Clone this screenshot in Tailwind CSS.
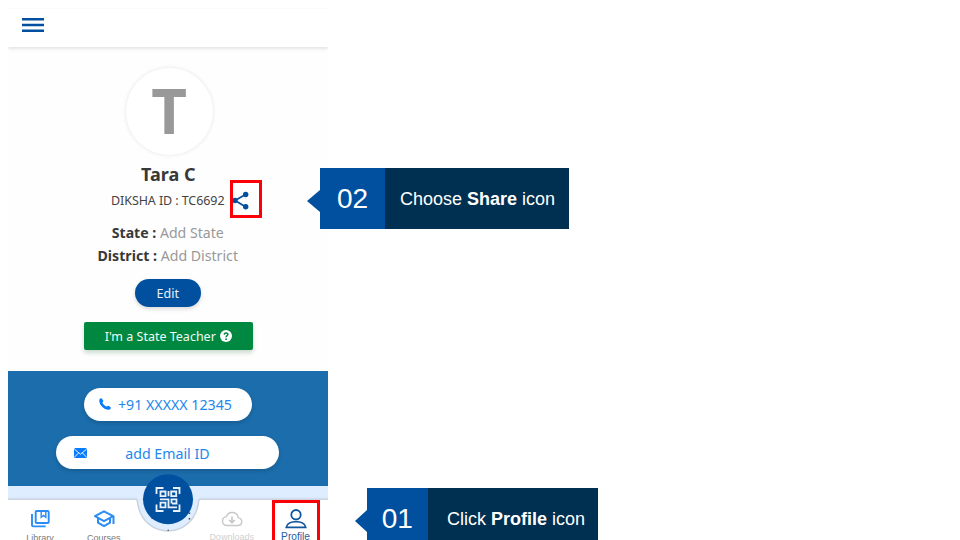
<!DOCTYPE html>
<html lang="en">
<head>
<meta charset="utf-8">
<title>Profile</title>
<script src="https://cdn.jsdelivr.net/npm/@tailwindcss/browser@4"></script>
</head>
<body class="relative h-[540px] w-[960px] overflow-hidden bg-white font-['Noto_Sans',sans-serif]">
<main class="ml-2 mt-2 flex h-[532px] w-[319.5px] flex-col overflow-hidden bg-[#fefefe]">
  <header class="flex h-[39px] shrink-0 items-center border-t border-[#fafafa] bg-white pl-[14px] pb-[6px] shadow-[0_2px_3px_rgba(0,0,0,0.1)]">
    <svg class="h-4 w-[22px]" viewBox="0 0 22 16" fill="#00509f"><path d="M0 1h22v2.5H0zM0 6.8h22v2.5H0zM0 12.6h22v2.5H0z"/></svg>
  </header>
  <section class="flex h-[324px] shrink-0 flex-col items-center pt-[21px]">
    <div class="ml-[3px] flex h-[87px] w-[87px] shrink-0 items-center justify-center rounded-full bg-white text-[62px] font-bold leading-none text-[#999] shadow-[0_0_4px_rgba(0,0,0,0.1)]"><span class="pb-[3px]">T</span></div>
    <h1 class="ml-[1px] mt-[7px] h-6 text-[18px] font-bold leading-6 text-[#383838]">Tara C</h1>
    <p class="mt-[4.5px] h-5 whitespace-nowrap text-[12.5px] leading-5 tracking-[-0.08px] text-[#444]">DIKSHA ID : TC6692</p>
    <p class="mt-[10px] h-[23px] whitespace-nowrap text-[14.1px] leading-[23px] text-[#999]"><b class="text-[#383838]">State :</b> Add State</p>
    <p class="h-[23px] whitespace-nowrap text-[14.15px] leading-[23px] text-[#999]"><b class="text-[#383838]">District :</b> Add District</p>
    <button class="mt-[12px] h-[28px] w-[66px] shrink-0 rounded-full bg-[#00509f] pt-[3px] text-[12.5px] text-[#e8f0f8] shadow-[0_2px_4px_rgba(0,0,0,0.15)]">Edit</button>
    <button class="ml-[1px] mt-[15px] flex h-[28px] w-[169px] shrink-0 items-center justify-center gap-[4px] rounded-[2px] bg-[#008840] text-[12.5px] text-[#f0faf4] shadow-[0_3px_4px_rgba(0,80,30,0.2)]">
      <span class="pt-[3px]">I'm a State Teacher</span>
      <svg class="h-3 w-3" viewBox="0 0 12 12"><circle cx="6" cy="6" r="6" fill="#fff"/><path d="M4.2 4.6C4.3 2.4 8 2.4 7.9 4.5 7.8 5.7 6.1 5.7 6.1 7.2" fill="none" stroke="#008840" stroke-width="1.5"/><circle cx="6.1" cy="9.2" r=".9" fill="#008840"/></svg>
    </button>
  </section>
  <section class="flex h-[114.5px] shrink-0 flex-col items-center bg-[#1b6dac] pt-[16.5px] text-[14.2px] text-[#2487ed]">
    <div class="flex h-[33px] w-[168.5px] shrink-0 items-center rounded-full bg-white pl-[15.5px] shadow-[0_2px_4px_rgba(0,0,0,0.16)]">
      <svg class="h-[12px] w-[12px] shrink-0" viewBox="0 0 12 12" fill="#087bff"><path d="M.5 1.2C1.2.3 2-.1 2.7.4L4.3 2.7C4.6 3.4 3.5 4 3.4 4.4 3.9 6 6 8.1 7.6 8.6 8 8.5 8.6 7.4 9.3 7.7L11.6 9.3C12 10 11.7 11 10.8 11.5 5.8 13-1 6.2.5 1.2Z"/></svg>
      <span class="ml-[7px] whitespace-nowrap pt-[2px]">+91 XXXXX 12345</span>
    </div>
    <div class="mt-[15.5px] flex h-[33px] w-[223px] shrink-0 items-center rounded-full bg-white pl-[17.5px] shadow-[0_2px_4px_rgba(0,0,0,0.16)]">
      <svg class="h-[10px] w-[13px] shrink-0" viewBox="0 0 13 10"><rect width="13" height="10" rx="1.5" fill="#087bff"/><path d="M.5 1.2 6.5 6.2 12.5 1.2M.6 9 4.5 5M12.4 9 8.5 5" fill="none" stroke="#fff" stroke-width=".9"/></svg>
      <span class="ml-[38.5px] whitespace-nowrap pt-[2px]">add Email ID</span>
    </div>
  </section>
  <div class="h-[13px] shrink-0 bg-[#deedff]"></div>
  <nav class="grid h-[60px] shrink-0 grid-cols-5 border-t border-[#ccd3dc] bg-white pt-[9px] text-center font-['Liberation_Sans',Arial,sans-serif] text-[9px] text-[#777] shadow-[0_-1px_2px_rgba(0,0,0,0.08)]">
    <a class="flex flex-col items-center">
      <svg class="h-[20px] w-[20px]" viewBox="0 0 20 20" fill="none" stroke="#2b8cf5" stroke-width="1.9"><rect x="5.7" y="2" width="13" height="12" rx="1"/><path d="M2 5v11.2q0 1.2 1.2 1.2h12.5"/><path d="M11.2 2v6.2l2.3-1.8 2.3 1.8V2" stroke-width="1.4"/></svg>
      <span class="mt-[4px] leading-[10px]">Library</span>
    </a>
    <a class="flex flex-col items-center">
      <svg class="h-[20px] w-[22px]" viewBox="0 0 22 20" fill="none" stroke="#2b8cf5" stroke-width="2" stroke-linejoin="round"><path d="M2 7.2 11 2.3l9.2 4.9-9.2 5z"/><path d="M5 9.2v4.5l6 3.5 6-3.5V9.2M20.5 7v8"/></svg>
      <span class="mt-[4px] leading-[10px]">Courses</span>
    </a>
    <span></span>
    <a class="flex flex-col items-center text-[#d0d0d0]">
      <svg class="h-[20px] w-[22px]" viewBox="0 0 22 20" fill="none" stroke="#c8c8c8" stroke-width="1.4"><path d="M5.8 16.5h10.9c5.4-.2 5.2-6.9.6-7.6C16.5 2.1 7.2 1.8 5.4 7.6.1 8.6.2 16 5.8 16.5Z"/><path d="M11 7.6v5.8M8.2 11 11 13.8 13.8 11" stroke-width="1.7"/></svg>
      <span class="mt-[3px] leading-[10px]">Downloads</span>
    </a>
    <a class="flex flex-col items-center text-[10.2px] text-[#1c5c9f]">
      <svg class="h-[20px] w-[22px]" viewBox="0 0 22 20" fill="none" stroke="#12569e" stroke-width="1.8"><circle cx="11" cy="5.7" r="4.7"/><path d="M1.3 18.3c1-7.5 18.4-7.5 19.4 0z"/></svg>
      <span class="mt-[3px] leading-[10px]">Profile</span>
    </a>
  </nav>
</main>

<!-- Scan button docked in the tab bar -->
<svg class="absolute left-[134px] top-[465px] h-[75px] w-[68px]" viewBox="0 0 68 75">
  <path d="M1.8 34.5C4 34.5 3.2 37 4 40 10.5 74.5 57.5 74.5 64 40 64.8 37 64 34.5 66.2 34.5" fill="#deedff" stroke="#ccd3dc" stroke-width="1.5"/>
  <path d="M3 29h62v5.5H3z" fill="#deedff"/>
  <path d="M17.5 54h2v-2h-2zM54.7 49h1.5v-1.5h-1.5zM54.7 54.5h1.5v-1.5h-1.5zM33.5 65.7h1.5v-1h-1.5z" fill="#444"/>
  <circle cx="34" cy="34.2" r="25" fill="#00509f"/>
  <g fill="none" stroke="#e9f2fc" stroke-width="1.8">
    <path d="M22.5 29v-6h7M39 23h6.5v6M22.5 39.5v6.500h7M39 46h6.500v-6.500"/>
    <path d="M26.500 26.500h5v4.700h-5zM37.200 26.500h5v4.700h-5zM26.500 37.700h5v4.700h-5zM34.500 26v5.200M26 34.300h8.500v8H43M38 38.500h4.500v-4.200H37.500v4.200"/>
  </g>
</svg>

<!-- Share icon and highlight frames -->
<svg class="absolute left-[232px] top-[191px] h-[19px] w-[18px]" viewBox="0 0 18 19"><path d="M13.500 3.500 3 9.500l10.500 6.200" fill="none" stroke="#00509f" stroke-width="1.700"/><g fill="#00509f"><circle cx="13.700" cy="3.500" r="2.700"/><circle cx="3" cy="9.500" r="2.700"/><circle cx="13.700" cy="15.700" r="2.700"/></g></svg>
<div class="absolute left-[230px] top-[180px] h-[38px] w-[32px] border-3 border-[#fb0007]"></div>
<div class="absolute left-[272px] top-[500px] h-[60px] w-[48px] border-3 border-[#fb0007]"></div>

<!-- Callouts -->
<div class="absolute left-[307px] top-[168px] flex h-[61px] items-center font-['Liberation_Sans',Arial,sans-serif] text-white">
  <svg class="mt-[4px] h-[22px] w-[13px]" viewBox="0 0 13 22"><path d="M13 0v22L0 11z" fill="#00509f"/></svg>
  <div class="flex h-full w-[65px] items-center justify-center bg-[#00509f] text-[28px]">02</div>
  <div class="flex h-full w-[184px] items-center justify-center bg-[#003051] pl-[1px] pt-[2px] text-[18px]"><p class="whitespace-nowrap">Choose <b>Share</b> icon</p></div>
</div>
<div class="absolute left-[355px] top-[488px] flex h-[61px] items-center font-['Liberation_Sans',Arial,sans-serif] text-white">
  <svg class="mt-[4px] h-[22px] w-[12px]" viewBox="0 0 12 22"><path d="M12 0v22L0 11z" fill="#00509f"/></svg>
  <div class="flex h-full w-[60.500px] items-center justify-center bg-[#00509f] text-[28px]">01</div>
  <div class="flex h-full w-[170px] items-center justify-center bg-[#003051] pl-[7px] pt-[2px] text-[18px]"><p class="whitespace-nowrap">Click <b>Profile</b> icon</p></div>
</div>
</body>
</html>
